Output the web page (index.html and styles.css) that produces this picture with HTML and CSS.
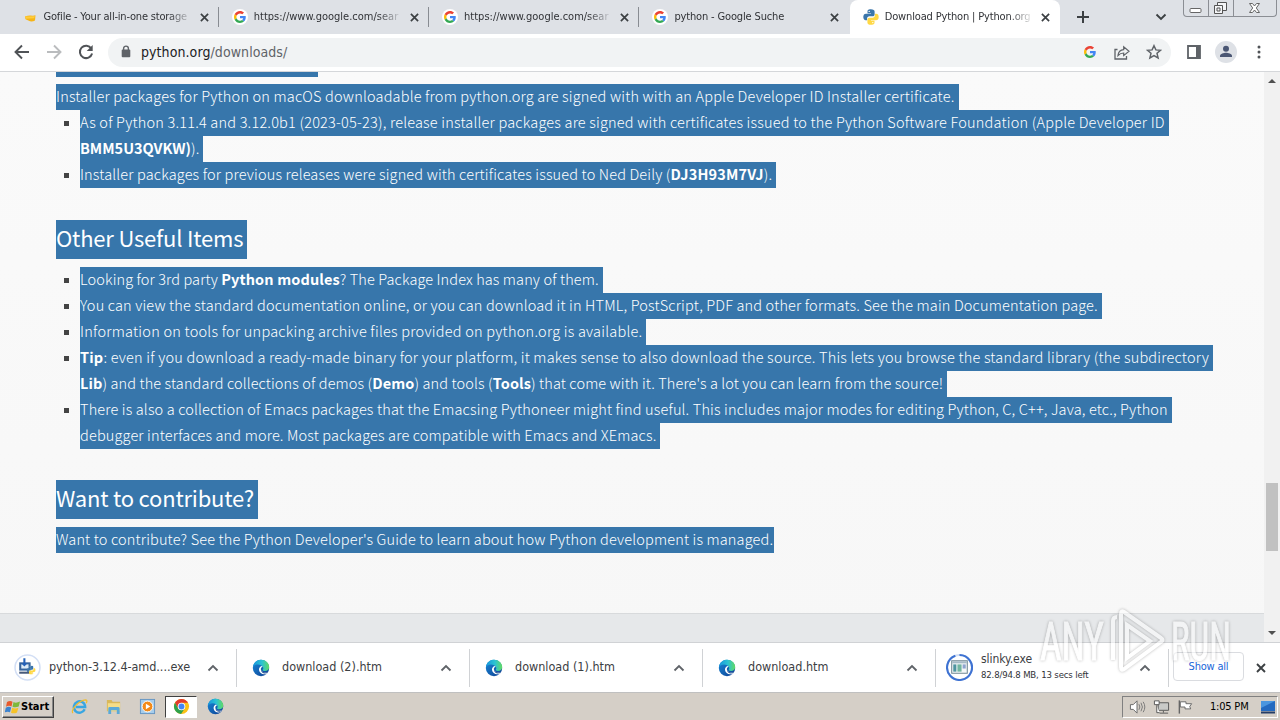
FILE: index.html
```html
<!DOCTYPE html>
<html lang="en">
<head>
    <meta charset="UTF-8">
    <title>Download Python | Python.org</title>
    <link rel="stylesheet" href="styles.css">
</head>
<body>
    <svg class="defs" width="0" height="0">
        <defs>
            <linearGradient id="edgeTop" x1="0" y1="0" x2="1" y2="0"><stop offset="0" stop-color="#1796dc"/><stop offset=".55" stop-color="#2cc3d2"/><stop offset="1" stop-color="#62db62"/></linearGradient>
            <linearGradient id="edgeLow" x1="0" y1="0" x2="1" y2="1"><stop offset="0" stop-color="#1688d8"/><stop offset="1" stop-color="#103f91"/></linearGradient>
            <symbol id="google" viewBox="0 0 48 48">
                <path fill="#ea4335" d="M24 9.500c3.500 0 6.700 1.200 9.200 3.600l6.900-6.900C35.900 2.400 30.500 0 24 0 14.600 0 6.500 5.400 2.600 13.200l8 6.200C12.400 13.700 17.700 9.500 24 9.500z"/>
                <path fill="#4285f4" d="M47 24.500c0-1.600-.2-3.100-.4-4.500H24v9h12.900c-.6 3-2.200 5.500-4.700 7.200l7.700 6C44.400 38 47 31.800 47 24.500z"/>
                <path fill="#fbbc05" d="M10.500 28.600c-.5-1.500-.8-3-.8-4.600s.3-3.100.8-4.600l-8-6.200C.9 16.500 0 20.100 0 24s.9 7.500 2.600 10.800z"/>
                <path fill="#34a853" d="M24 48c6.500 0 11.900-2.100 15.900-5.800l-7.700-6c-2.200 1.400-4.900 2.300-8.200 2.300-6.300 0-11.600-4.200-13.500-9.900l-8 6.200C6.500 42.600 14.600 48 24 48z"/>
            </symbol>
            <symbol id="python" viewBox="0 0 16 16">
                <path fill="#3b76ab" d="M7.900.3C4.700.3 4.500 1.700 4.500 2.600v1.600H8v.6H3C1.300 4.800.3 6 .3 8.100c0 2 1 3.200 2.400 3.200h1.400V9.500c0-1.200 1-2.200 2.300-2.200h3.400c1 0 1.800-.8 1.800-1.900V2.600C11.600 1.200 10.400.3 7.900.3z"/>
                <path fill="#ffd845" d="M8.100 15.700c3.200 0 3.400-1.400 3.400-2.300v-1.600H8v-.6h5c1.700 0 2.700-1.200 2.700-3.300s-1-3.200-2.400-3.200h-1.400v1.800c0 1.200-1 2.200-2.300 2.200H6.200c-1 0-1.800.8-1.800 1.900v2.800c0 1.400 1.200 2.300 3.700 2.300z"/>
                <circle cx="6.200" cy="2.400" r=".7" fill="#fff"/><circle cx="9.800" cy="13.600" r=".7" fill="#fff"/>
            </symbol>
            <symbol id="edge" viewBox="0 0 18 18">
                <circle cx="9" cy="9" r="8.200" fill="url(#edgeLow)"/>
                <path fill="url(#edgeTop)" d="M1 8C1.500 3.500 5 .8 9 .8c4.800 0 8.200 3.400 8.200 7.200 0 2.600-2 4-4.200 4-1.600 0-2.800-.6-2.200-1.400.7-1 .6-2-.1-2.900C9.600 6.300 7.800 5.500 6 5.500 3.800 5.500 2 6.500 1 8z"/>
                <path fill="#fff" d="M10.700 7.700C9 8.200 8.600 9.600 9 11c.6 2 3.500 3.200 7 2-.5 1-1 1.500-1.500 1.900-3.500 1-7-.2-7.500-3.800-.2-1.900.7-3.500 2.400-4.200z"/>
                <path fill="#17478f" d="M9 11c.6 2 3.500 3.200 7 2l-.8 1.100C12 15.200 9.300 14 9 11z"/>
            </symbol>
            <symbol id="close" viewBox="0 0 10 10"><path d="M1 1l8 8M9 1L1 9" stroke="#3c4043" stroke-width="1.900" fill="none"/></symbol>
            <symbol id="up" viewBox="0 0 12 8"><path d="M1.500 6.500L6 2l4.500 4.500" stroke="#5f6368" stroke-width="1.800" fill="none"/></symbol>
        </defs>
    </svg>

    <div class="tabs">
        <div class="tab">
            <svg class="favicon" viewBox="0 0 16 16"><path d="M3 7.500q4-1.500 8-.7l2.500-.6-.5 5.300q-2 1.200-5 .8l-4.500-2z" fill="#f6b417"/><path d="M3 7.500l10-.3-1 2-8 .6z" fill="#ffcd3c"/></svg>
            <span class="tab-title t1">Gofile - Your all-in-one storage</span>
            <svg class="tab-close"><use href="#close"/></svg>
        </div>
        <div class="tab">
            <span class="favicon round"><svg><use href="#google"/></svg></span>
            <span class="tab-title t2">https://www.google.com/sear</span>
            <svg class="tab-close"><use href="#close"/></svg>
        </div>
        <div class="tab">
            <span class="favicon round"><svg><use href="#google"/></svg></span>
            <span class="tab-title t2">https://www.google.com/sear</span>
            <svg class="tab-close"><use href="#close"/></svg>
        </div>
        <div class="tab">
            <span class="favicon round"><svg><use href="#google"/></svg></span>
            <span class="tab-title t4">python - Google Suche</span>
            <svg class="tab-close"><use href="#close"/></svg>
        </div>
        <div class="tab active">
            <svg class="favicon"><use href="#python"/></svg>
            <span class="tab-title t5">Download Python | Python.org</span>
            <svg class="tab-close"><use href="#close"/></svg>
        </div>
        <svg class="new-tab" viewBox="0 0 12 12"><path d="M6 0v12M0 6h12" stroke="#3c4043" stroke-width="2"/></svg>
        <svg class="tab-search" viewBox="0 0 12 8"><path d="M1.500 1.500L6 6l4.500-4.500" stroke="#3c4043" stroke-width="1.900" fill="none"/></svg>
        <div class="window-buttons">
            <span><svg width="13" height="16" viewBox="0 0 13 16"><rect x="1" y="8.500" width="11" height="4" rx="1" fill="#fff" stroke="#666"/></svg></span>
            <span><svg width="15" height="16" viewBox="0 0 15 16"><g fill="#f4f5f7" stroke="#555"><path d="M4.500 2.500h9v8h-9z"/><path d="M1.500 5.500h8v8h-8z"/><path d="M4 8h3v3H4z"/></g></svg></span>
            <span><svg width="13" height="16" viewBox="0 0 13 16"><path d="M1.500 3.500h3l2 2.500 2-2.500h3L8.300 8l3.200 4.500h-3l-2-2.500-2 2.500h-3L4.700 8z" fill="#fff" stroke="#666"/></svg></span>
        </div>
    </div>

    <div class="toolbar">
        <svg class="nav" viewBox="0 0 16 16"><path d="M15 8H2M8 1.500L1.500 8 8 14.500" stroke="#505357" stroke-width="1.900" fill="none"/></svg>
        <svg class="nav" viewBox="0 0 16 16"><path d="M1 8h13M8 1.500L14.500 8 8 14.500" stroke="#babcbe" stroke-width="1.900" fill="none"/></svg>
        <svg class="nav" viewBox="0 0 16 16"><path d="M13.300 4.500A6.200 6.200 0 1 0 14.100 9.500" stroke="#505357" stroke-width="2" fill="none"/><path d="M14.700 1v6h-6z" fill="#505357"/></svg>
        <div class="omnibox">
            <svg class="lock" viewBox="0 0 10 13"><rect x=".7" y="4.500" width="8.600" height="7.700" rx="1" fill="#5f6368"/><path d="M2.600 5V3.500a2.400 2.400 0 0 1 4.800 0V5" fill="none" stroke="#5f6368" stroke-width="1.400"/></svg>
            <span class="url">python.org<span>/downloads/</span></span>
            <svg class="g-icon"><use href="#google"/></svg>
            <svg class="share" viewBox="0 0 16 15"><path d="M3.500 4.500h-2.500V14h11.500v-3" fill="none" stroke="#5f6368" stroke-width="1.300"/><path d="M4 10.500C4.400 6.800 6.500 5 9.700 4.700V1.800L15 6.300l-5.300 4.300V8C7.500 8 5.700 8.700 4 10.500z" fill="none" stroke="#5f6368" stroke-width="1.200"/></svg>
            <svg class="star" viewBox="0 0 16 16"><path d="M8 1.700l1.900 4.200 4.600.4-3.500 3 1.100 4.600L8 11.500l-4.100 2.400L5 9.300l-3.500-3 4.600-.4z" fill="none" stroke="#5f6368" stroke-width="1.500"/></svg>
        </div>
        <svg class="panel" viewBox="0 0 14 14"><path d="M1 1h12v12H1z" fill="#fff" stroke="#5f6368" stroke-width="1.800"/><path d="M9 1h4v12H9z" fill="#5f6368"/></svg>
        <svg class="avatar" viewBox="0 0 22 22"><circle cx="11" cy="11" r="11" fill="#dee1e6"/><circle cx="11" cy="7.800" r="3" fill="#4a5673"/><path d="M5 16v-1.200c0-2 4-3 6-3s6 1 6 3V16z" fill="#4a5673"/></svg>
        <svg class="menu" viewBox="0 0 4 14"><g fill="#505357"><circle cx="2" cy="2" r="1.500"/><circle cx="2" cy="7" r="1.500"/><circle cx="2" cy="12" r="1.500"/></g></svg>
    </div>

    <div class="viewport">
        <div class="page">
            <div class="content">
                <div class="cut-heading"></div>
                <p><span class="line l1">Installer packages for Python on macOS downloadable from python.org are signed with with an Apple Developer ID Installer certificate.</span></p>
                <ul>
                    <li><span class="line l2">As of Python 3.11.4 and 3.12.0b1 (2023-05-23), release installer packages are signed with certificates issued to the Python Software Foundation (Apple Developer ID</span>
                        <span class="line l3"><b>BMM5U3QVKW)</b>).</span></li>
                    <li><span class="line l4">Installer packages for previous releases were signed with certificates issued to Ned Deily (<b>DJ3H93M7VJ</b>).</span></li>
                </ul>
                <h2><span class="line">Other Useful Items</span></h2>
                <ul>
                    <li><span class="line l5">Looking for 3rd party <b>Python modules</b>? The Package Index has many of them.</span></li>
                    <li><span class="line l6">You can view the standard documentation online, or you can download it in HTML, PostScript, PDF and other formats. See the main Documentation page.</span></li>
                    <li><span class="line l7">Information on tools for unpacking archive files provided on python.org is available.</span></li>
                    <li><span class="line l8"><b>Tip</b>: even if you download a ready-made binary for your platform, it makes sense to also download the source. This lets you browse the standard library (the subdirectory</span>
                        <span class="line l9"><b>Lib</b>) and the standard collections of demos (<b>Demo</b>) and tools (<b>Tools</b>) that come with it. There's a lot you can learn from the source!</span></li>
                    <li><span class="line l10">There is also a collection of Emacs packages that the Emacsing Pythoneer might find useful. This includes major modes for editing Python, C, C++, Java, etc., Python</span>
                        <span class="line l11">debugger interfaces and more. Most packages are compatible with Emacs and XEmacs.</span></li>
                </ul>
                <h2 class="last"><span class="line">Want to contribute?</span></h2>
                <p><span class="line l12">Want to contribute? See the Python Developer's Guide to learn about how Python development is managed.</span></p>
            </div>
            <div class="page-footer"></div>
        </div>
        <div class="scrollbar">
            <svg viewBox="0 0 8 4"><path d="M0 4l4-4 4 4z" fill="#505050"/></svg>
            <div class="thumb"></div>
            <svg viewBox="0 0 8 4"><path d="M0 0l4 4 4-4z" fill="#505050"/></svg>
        </div>
    </div>

    <div class="downloads">
        <div class="download">
            <svg class="file-icon ring" viewBox="0 0 26 26"><circle cx="13" cy="13" r="12" fill="#fff" stroke="#d3dff5" stroke-width="1.500"/><path d="M5 8h11v8H5z" fill="#37659d"/><path d="M7 10h7v4H7z" fill="#dcebf7"/><path d="M5 17h10v2H5z" fill="#475a7b"/><path d="M9 4h2v5h2l-3 3-3-3h2z" fill="#2461b8"/><svg x="12" y="11" width="9" height="9"><use href="#python"/></svg></svg>
            <span class="file-name">python-3.12.4-amd....exe</span>
            <svg class="chevron"><use href="#up"/></svg>
        </div>
        <div class="download">
            <svg class="file-icon"><use href="#edge"/></svg>
            <span class="file-name">download (2).htm</span>
            <svg class="chevron"><use href="#up"/></svg>
        </div>
        <div class="download">
            <svg class="file-icon"><use href="#edge"/></svg>
            <span class="file-name">download (1).htm</span>
            <svg class="chevron"><use href="#up"/></svg>
        </div>
        <div class="download">
            <svg class="file-icon"><use href="#edge"/></svg>
            <span class="file-name">download.htm</span>
            <svg class="chevron"><use href="#up"/></svg>
        </div>
        <div class="download">
            <svg class="file-icon ring" viewBox="0 0 26 26"><circle cx="13" cy="13" r="12" fill="#fff" stroke="#d3e0f5" stroke-width="2"/><path d="M13 1A12 12 0 1 1 9 1.700" fill="none" stroke="#3e72d2" stroke-width="2"/><path d="M5.500 6.500h15v12h-15z" fill="#f5f8f8" stroke="#6f8792"/><path d="M6 7h14v2H6z" fill="#a6bac6"/><path d="M7 10h3v7H7z" fill="#4f94a0"/><path d="M11 10h4v7h-4z" fill="#72b5a0"/><path d="M16 10h3v4h-3z" fill="#8ea4ce"/></svg>
            <span class="file-name running">slinky.exe<small>82.8/94.8 MB, 13 secs left</small></span>
            <svg class="chevron"><use href="#up"/></svg>
        </div>
        <button class="show-all">Show all</button>
        <svg class="bar-close"><use href="#close"/></svg>
    </div>

    <div class="taskbar">
        <div class="start">
            <svg viewBox="0 0 16 16"><path d="M2 3q3-2 5.500-.3L6.500 7.500Q4 6 1 7.700z" fill="#e8592b"/><path d="M8.500 3Q11 4.500 15 2.500L13.700 7.500Q10.500 9 7.500 7.700z" fill="#7db83a"/><path d="M.8 8.700q3-1.700 5.400-.2L5 13.300Q2.700 12-.3 13.500z" fill="#3c83cf"/><path d="M7.200 8.800q3 1.400 6.200 0L12 13.500q-3 1.600-6 .2z" fill="#f6c328"/></svg>
            <span>Start</span>
        </div>
        <div class="task">
            <svg viewBox="0 0 18 18"><path d="M14.500 12A6 6 0 1 1 15 9.500H5" fill="none" stroke="#38a6e2" stroke-width="2.600"/><path d="M2 16C-.5 13 8 2.500 15.500 2c2 0 1.500 2 .5 3.500" fill="none" stroke="#f0bd2d" stroke-width="1.300"/></svg>
        </div>
        <div class="task">
            <svg viewBox="0 0 18 18"><path d="M2 2h5l1 2h8v10H2z" fill="#d9b85a"/><path d="M3 5.500h13V14H3z" fill="#f5dd88"/><path d="M3.500 17V11q0-1.500 1.500-1.500h9q1.500 0 1.500 1.500v6h-3v-4h-6v4z" fill="#5ba9d8"/></svg>
        </div>
        <div class="task">
            <svg viewBox="0 0 18 18"><rect x="1.500" y="1.500" width="15" height="15" fill="#a6cdec" stroke="#6595c2"/><circle cx="9" cy="9" r="5.700" fill="#f28a19" stroke="#fff"/><path d="M7.300 6v6l4.700-3z" fill="#fff"/></svg>
        </div>
        <div class="task pressed">
            <svg viewBox="0 0 18 18"><circle cx="9" cy="9" r="8" fill="#fbc116"/><path d="M2.100 5A8 8 0 0 1 15.900 5H9L5.500 11z" fill="#e33b2e"/><path d="M2.100 5A8 8 0 0 0 8.500 17L12.400 11 9 13 5.500 11z" fill="#2da14d"/><circle cx="9" cy="9" r="4" fill="#fff"/><circle cx="9" cy="9" r="3.100" fill="#4285f4"/></svg>
        </div>
        <div class="task">
            <svg><use href="#edge"/></svg>
        </div>
        <div class="tray">
            <svg viewBox="0 0 18 16"><path d="M1.500 5.500h3l4-4v13l-4-4h-3z" fill="#fff" stroke="#666"/><path d="M10.500 5q2 3 0 6M12.700 3.500q3 4.500 0 9M15 2.500q3.500 5.500 0 11" fill="none" stroke="#777"/></svg>
            <svg class="network" viewBox="0 0 18 16"><path d="M5.500 3.500h11v8h-11z" fill="#c9cac8" stroke="#555"/><path d="M7 14.500h9M11 12v2" stroke="#555"/><path d="M1.500 1.500h5v4h-5zM4 6v8h3" fill="#fff" stroke="#555"/></svg>
            <svg class="flag" viewBox="0 0 18 16"><path d="M2.500 1v14" stroke="#666" stroke-width="1.500"/><path d="M3.500 2.500h6v2h6l-2 3 1 2.500h-6v-2h-5z" fill="#fff" stroke="#666"/></svg>
            <span>1:05 PM</span>
            <svg class="desktop" viewBox="0 0 16 14"><path d="M1 1h14v10H1z" fill="#246ac0"/><path d="M1 1h14L1 8z" fill="#4b96df"/><path d="M1 11.500h14v2H1z" fill="#253d66"/></svg>
        </div>
    </div>

    <svg class="watermark" viewBox="0 0 200 70">
        <g class="mark-text">
            <text x="4" y="54" textLength="64" lengthAdjust="spacingAndGlyphs">ANY</text>
            <text x="135" y="54" textLength="60" lengthAdjust="spacingAndGlyphs">RUN</text>
        </g>
        <g class="mark-play">
            <path d="M77 54V15q0-4 4-4M88 6l37 26q3 2 0 4L88 63q-3 2-3-2V8q0-4 3-2z"/>
            <path d="M91 19l23 16-23 17z"/>
        </g>
    </svg>
</body>
</html>
```
FILE: styles.css
```css
* {
    margin: 0;
    padding: 0;
    box-sizing: border-box;
}

body {
    width: 1280px;
    height: 720px;
    overflow: hidden;
    display: flex;
    flex-direction: column;
    position: relative;
    font-family: "DejaVu Sans Condensed", "DejaVu Sans", sans-serif;
    font-stretch: condensed;
    font-size: 12px;
    color: #3c4043;
    background: #fff;
}

svg {
    display: block;
    flex: none;
}

.defs {
    position: absolute;
}

/* Tab strip */
.tabs {
    height: 34px;
    flex: none;
    display: flex;
    align-items: center;
    padding-left: 8.500px;
    background: #dee1e6;
}

.tab {
    width: 210.3px;
    height: 34px;
    flex: none;
    display: flex;
    align-items: center;
    padding-left: 13px;
    background: linear-gradient(#888c92, #888c92) right 0 center / 1px 20px no-repeat;
}

.tab:nth-child(4) {
    background: none;
}

.tab.active {
    background: #fff;
    border-radius: 8px 8px 0 0;
}

.favicon {
    width: 16px;
    height: 16px;
    flex: none;
}

.round {
    display: flex;
    align-items: center;
    justify-content: center;
    border-radius: 50%;
    background: #fff;
}

.round svg {
    width: 12px;
    height: 12px;
}

.tab-title {
    width: 150px;
    margin: 0 6px 0 6px;
    overflow: hidden;
    white-space: nowrap;
    font-size: 11px;
    line-height: 18px;
    color: #303236;
    -webkit-mask-image: linear-gradient(to right, #000 124px, transparent 149px);
}

.t1 {
    letter-spacing: -0.2px;
}

.t2 {
    letter-spacing: 0;
}

.t4 {
    letter-spacing: -0.15px;
}

.t5 {
    letter-spacing: -0.15px;
}

.tab-close {
    width: 9px;
    height: 9px;
}

.new-tab {
    width: 12px;
    height: 12px;
    margin-left: 17px;
}

.tab-search {
    width: 12px;
    height: 8px;
    margin-left: 66px;
}

.window-buttons {
    display: flex;
    align-self: flex-start;
    height: 17px;
    margin-left: 16px;
    border: 1px solid #8b8e94;
    border-top: none;
    border-radius: 0 0 4px 4px;
}

.window-buttons span {
    width: 25px;
    display: flex;
    justify-content: center;
    border-right: 1px solid #8b8e94;
}

.window-buttons span:last-child {
    width: 42px;
    border-right: none;
}

/* Toolbar */
.toolbar {
    height: 38px;
    flex: none;
    display: flex;
    align-items: center;
    padding: 0 0 1px 14px;
    border-bottom: 1px solid #d5d7da;
}

.nav {
    width: 16px;
    height: 16px;
    margin-right: 16px;
}

.omnibox {
    width: 1063px;
    height: 29px;
    display: flex;
    align-items: center;
    margin-left: -2px;
    padding-left: 13px;
    border-radius: 15px;
    background: #f1f3f4;
}

.lock {
    width: 10px;
    height: 13px;
    margin-top: -2px;
}

.url {
    flex: 1;
    margin-left: 10px;
    font-size: 14px;
    letter-spacing: 0.08px;
    color: #202124;
}

.url span {
    color: #5f6368;
}

.g-icon {
    width: 12px;
    height: 12px;
    margin-right: 18px;
}

.share {
    width: 16px;
    height: 15px;
    margin-right: 16px;
}

.star {
    width: 16px;
    height: 16px;
    margin-right: 9px;
}

.panel {
    width: 14px;
    height: 14px;
    margin-left: 16px;
}

.avatar {
    width: 22px;
    height: 22px;
    margin-left: 14px;
}

.menu {
    width: 4px;
    height: 14px;
    margin-left: 20px;
}

/* Page */
.viewport {
    height: 570px;
    flex: none;
    display: flex;
}

.page {
    width: 1264px;
    display: flex;
    flex-direction: column;
    background: linear-gradient(#fafafa, #f7f7f7);
}

.content {
    height: 541px;
    padding-left: 56px;
    font-family: "Noto Sans CJK SC", sans-serif;
    font-stretch: normal;
    font-weight: 300;
    font-size: 14.5px;
    line-height: 24px;
    color: #fff;
}

.content b {
    font-weight: 700;
}

.cut-heading {
    width: 262px;
    height: 5px;
    margin-bottom: 7px;
    background: #3776ab;
}

.line {
    display: block;
    width: fit-content;
    height: 26px;
    padding-right: 4px;
    white-space: nowrap;
    background: #3776ab;
    letter-spacing: 0.19px;
}

/* Tracking per line keeps the selection edges in place */
.l2,
.l8 {
    letter-spacing: 0.2px;
}

.l3 {
    letter-spacing: 0;
}

.l4 {
    letter-spacing: 0.16px;
}

.l5 {
    letter-spacing: 0.12px;
}

.l6,
.l10,
.l11 {
    letter-spacing: 0.16px;
}

.l7 {
    letter-spacing: 0.235px;
}

.l9 {
    letter-spacing: 0.12px;
}

.l12 {
    padding-right: 1px;
    letter-spacing: 0.155px;
}

.content ul {
    padding-left: 24px;
    list-style: none;
}

.content li {
    position: relative;
}

.content li::before {
    content: "";
    position: absolute;
    left: -16px;
    top: 11px;
    width: 5px;
    height: 5px;
    background: #444;
}

.content h2 {
    margin: 32px 0 8px;
    font-size: 22px;
    font-weight: 400;
    line-height: 35px;
}

.content h2.last {
    margin-top: 31px;
}

.content h2 .line {
    height: 39px;
    letter-spacing: -0.2px;
}

.page-footer {
    height: 29px;
    background: #e6e8ea;
    border-top: 1px solid #d8dadc;
}

.scrollbar {
    width: 16px;
    display: flex;
    flex-direction: column;
    align-items: center;
    padding: 7px 0;
    background: #f1f1f1;
}

.scrollbar svg {
    width: 8px;
    height: 4px;
}

.thumb {
    width: 12px;
    height: 68px;
    margin: 400px 0 auto;
    background: #c1c1c1;
}

/* Download shelf */
.downloads {
    height: 51px;
    flex: none;
    display: flex;
    align-items: center;
    padding-left: 4px;
    border-top: 1px solid #d0d2d5;
    border-bottom: 1px solid #c0c0c0;
}

.download {
    width: 233px;
    height: 38px;
    display: flex;
    align-items: center;
    padding: 0 17px 0 15px;
    border-right: 1px solid #d0d2d5;
}

.file-icon {
    width: 18px;
    height: 18px;
}

.file-icon.ring {
    width: 27px;
    height: 27px;
    margin: 0 -4px 0 -5px;
}

.file-name {
    flex: 1;
    margin: -2px 0 0 12px;
    white-space: nowrap;
    font-size: 12.5px;
    line-height: 16px;
}

.ring + .file-name {
    letter-spacing: -0.05px;
}

.running {
    margin-top: -1px;
    font-size: 12px;
}

.file-name small {
    display: block;
    font-size: 9.5px;
    letter-spacing: -0.15px;
    color: #303236;
}

.chevron {
    width: 12px;
    height: 8px;
}

.show-all {
    width: 71px;
    height: 29px;
    margin: -2px 0 0 4px;
    padding-bottom: 1px;
    border: 1px solid #dadce0;
    border-radius: 4px;
    background: #fff;
    font: inherit;
    font-size: 11px;
    letter-spacing: -0.2px;
    color: #1a66d8;
}

.bar-close {
    width: 10px;
    height: 10px;
    margin-left: 12px;
}

/* Taskbar */
.taskbar {
    height: 27px;
    flex: none;
    display: flex;
    align-items: center;
    padding-left: 2px;
    background: #d5cfc7;
}

.start {
    width: 52px;
    height: 22px;
    display: flex;
    align-items: center;
    padding-left: 2px;
    border: 1px solid;
    border-color: #fff #404040 #404040 #fff;
    box-shadow: inset -1px -1px 0 #888;
    font-size: 11px;
    font-weight: bold;
    color: #000;
}

.start svg {
    width: 16px;
    height: 16px;
}

.task {
    width: 32px;
    height: 22px;
    display: flex;
    align-items: center;
    justify-content: center;
    margin-left: 2px;
}

.start + .task {
    margin-left: 9px;
}

.task svg {
    width: 17px;
    height: 17px;
}

.pressed {
    background: #fff;
    border: 1px solid;
    border-color: #404040 #fff #fff #404040;
}

.tray {
    width: 156px;
    height: 22px;
    display: flex;
    align-items: center;
    margin: 0 2px 0 auto;
    padding-left: 6px;
    border: 1px solid;
    border-color: #808080 #fff #fff #808080;
    font-size: 11px;
    color: #000;
}

.tray svg {
    width: 17px;
    height: 16px;
}

.tray .network,
.tray .flag {
    margin-left: 7px;
}

.tray span {
    flex: 1;
    margin-left: 16px;
    white-space: nowrap;
    letter-spacing: -0.2px;
}

.tray .desktop {
    width: 16px;
    height: 14px;
    margin-right: 1px;
}

/* Watermark laid over the page and the shelf */
.watermark {
    position: absolute;
    left: 1036px;
    top: 606px;
    width: 200px;
    height: 70px;
    filter: drop-shadow(0 0 1.5px rgba(0, 0, 0, 0.5));
    opacity: 0.55;
}

.mark-text {
    font-family: Roboto, sans-serif;
    font-size: 53px;
    fill: #fff;
    stroke: #fff;
    stroke-width: 1;
}

.mark-play {
    fill: none;
    stroke: #fff;
    stroke-width: 4;
}
```
